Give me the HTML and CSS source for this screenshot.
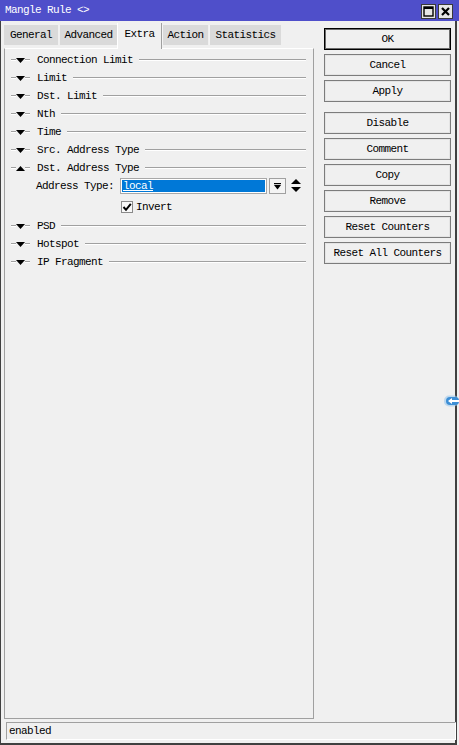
FILE: index.html
```html
<!DOCTYPE html>
<html>
<head>
<meta charset="utf-8">
<link rel="stylesheet" href="styles.css">
</head>
<body>
<div class="window">
  <div class="titlebar">
    <span class="title">Mangle Rule &lt;&gt;</span>
    <div class="tb-buttons">
      <span class="tb-btn"><svg width="11" height="11" viewBox="0 0 11 11"><rect x="1" y="1" width="9" height="9" fill="none" stroke="#000" stroke-width="1.4"/><rect x="1" y="1" width="9" height="2" fill="#000"/></svg></span>
      <span class="tb-btn"><svg width="11" height="11" viewBox="0 0 11 11"><path d="M2 2 L9 9 M9 2 L2 9" stroke="#000" stroke-width="2.2"/></svg></span>
    </div>
  </div>
  <div class="frame">
    <div class="main">
      <div class="left">
        <div class="tabs">
          <span class="tab t-general">General</span>
          <span class="tab t-advanced">Advanced</span>
          <span class="tab active t-extra">Extra</span>
          <span class="tab t-action">Action</span>
          <span class="tab t-stats">Statistics</span>
        </div>
        <div class="panel">
          <div class="row"><span class="seg"></span><svg class="tri" width="9" height="5" viewBox="0 0 9 5"><polygon points="0,0 9,0 4.5,5" fill="#000"/></svg><span class="seg"></span><span class="label">Connection Limit</span><span class="line"></span></div>
          <div class="row"><span class="seg"></span><svg class="tri" width="9" height="5" viewBox="0 0 9 5"><polygon points="0,0 9,0 4.5,5" fill="#000"/></svg><span class="seg"></span><span class="label">Limit</span><span class="line"></span></div>
          <div class="row"><span class="seg"></span><svg class="tri" width="9" height="5" viewBox="0 0 9 5"><polygon points="0,0 9,0 4.5,5" fill="#000"/></svg><span class="seg"></span><span class="label">Dst. Limit</span><span class="line"></span></div>
          <div class="row"><span class="seg"></span><svg class="tri" width="9" height="5" viewBox="0 0 9 5"><polygon points="0,0 9,0 4.5,5" fill="#000"/></svg><span class="seg"></span><span class="label">Nth</span><span class="line"></span></div>
          <div class="row"><span class="seg"></span><svg class="tri" width="9" height="5" viewBox="0 0 9 5"><polygon points="0,0 9,0 4.5,5" fill="#000"/></svg><span class="seg"></span><span class="label">Time</span><span class="line"></span></div>
          <div class="row"><span class="seg"></span><svg class="tri" width="9" height="5" viewBox="0 0 9 5"><polygon points="0,0 9,0 4.5,5" fill="#000"/></svg><span class="seg"></span><span class="label">Src. Address Type</span><span class="line"></span></div>
          <div class="row"><span class="seg"></span><svg class="tri" width="9" height="5" viewBox="0 0 9 5"><polygon points="0,5 9,5 4.5,0" fill="#000"/></svg><span class="seg"></span><span class="label">Dst. Address Type</span><span class="line"></span></div>
          <div class="field-row">
            <span class="field-label">Address Type:</span>
            <span class="combo"><span class="combo-text">local</span></span>
            <span class="drop-btn"><svg width="7" height="7" viewBox="0 0 7 7"><rect x="0" y="0" width="7" height="1.2" fill="#000"/><polygon points="0,2 7,2 3.5,6.5" fill="#000"/></svg></span>
            <span class="spinner"><svg width="10" height="14" viewBox="0 0 10 14"><polygon points="0,5 10,5 5,0" fill="#000"/><polygon points="0,8 10,8 5,13" fill="#000"/></svg></span>
          </div>
          <div class="check-row">
            <span class="checkbox"><svg width="10" height="10" viewBox="0 0 10 10"><polyline points="1.5,5 4,7.8 8.8,1.8" fill="none" stroke="#000" stroke-width="2"/></svg></span>
            <span class="check-label">Invert</span>
          </div>
          <div class="row"><span class="seg"></span><svg class="tri" width="9" height="5" viewBox="0 0 9 5"><polygon points="0,0 9,0 4.5,5" fill="#000"/></svg><span class="seg"></span><span class="label">PSD</span><span class="line"></span></div>
          <div class="row"><span class="seg"></span><svg class="tri" width="9" height="5" viewBox="0 0 9 5"><polygon points="0,0 9,0 4.5,5" fill="#000"/></svg><span class="seg"></span><span class="label">Hotspot</span><span class="line"></span></div>
          <div class="row"><span class="seg"></span><svg class="tri" width="9" height="5" viewBox="0 0 9 5"><polygon points="0,0 9,0 4.5,5" fill="#000"/></svg><span class="seg"></span><span class="label">IP Fragment</span><span class="line"></span></div>
        </div>
      </div>
      <div class="right">
        <div class="btn default">OK</div>
        <div class="btn">Cancel</div>
        <div class="btn">Apply</div>
        <div class="btn spaced">Disable</div>
        <div class="btn">Comment</div>
        <div class="btn">Copy</div>
        <div class="btn">Remove</div>
        <div class="btn">Reset Counters</div>
        <div class="btn">Reset All Counters</div>
      </div>
    </div>
    <div class="status"><span>enabled</span></div>
  </div>
  <div class="edge-arrow"><svg width="16" height="12" viewBox="0 0 16 12"><rect x="1" y="0.5" width="15" height="11" rx="5" fill="#9cc8ec" opacity="0.6"/><rect x="3" y="2" width="13" height="8" rx="4" fill="#3d8fd6"/><polygon points="5,6 9,3 9,5 16,5 16,7 9,7 9,9" fill="#fff"/></svg></div>
</div>
</body>
</html>
```

FILE: styles.css
```css
* { box-sizing: border-box; }
html, body { margin: 0; padding: 0; }
body {
  background: #f0f0f0;
  font-family: "Liberation Mono", "DejaVu Sans Mono", monospace;
  font-size: 11px;
  letter-spacing: -0.6px;
  color: #000;
}
.window {
  position: relative;
  width: 459px;
  height: 745px;
  overflow: hidden;
}
.titlebar {
  height: 21px;
  background: #4f4fca;
  display: flex;
  align-items: center;
  justify-content: space-between;
  padding: 0 6px 0 5px;
}
.title { color: #fff; line-height: 21px; }
.tb-buttons { display: flex; gap: 2px; margin-top: 1px; }
.tb-btn {
  width: 15px;
  height: 15px;
  background: #e6e6e6;
  border: 1px solid #3a3a3a;
  display: flex;
  align-items: center;
  justify-content: center;
}
.tb-btn svg { display: block; }
.frame {
  width: 457px;
  height: 724px;
  border-left: 1px solid #404040;
  border-right: 2px solid #404040;
  border-bottom: 2px solid #404040;
  padding: 2px 0 0 3px;
  display: flex;
  flex-direction: column;
}
.main {
  height: 696px;
  display: flex;
}
.left {
  width: 310px;
  display: flex;
  flex-direction: column;
}
.tabs {
  height: 25px;
  display: flex;
  align-items: flex-start;
  position: relative;
  z-index: 1;
}
.tab {
  margin-top: 2px;
  height: 20px;
  line-height: 20px;
  text-align: center;
  background: #dadada;
  flex: none;
}
.t-general { width: 54px; margin-right: 2px; }
.t-advanced { width: 57px; }
.t-extra { width: 45px; }
.t-action { width: 46px; margin-right: 1px; border-left: 1px solid #f4f4f4; }
.t-stats { width: 72px; border-left: 1px solid #f4f4f4; }
.tab.active {
  margin-top: 0;
  height: 26px;
  line-height: 22px;
  background: #f0f0f0;
  border-left: 1px solid #fff;
  border-right: 1px solid #a0a0a0;
}
.panel {
  flex: 1;
  border-top: 1px solid #fff;
  border-left: 1px solid #a0a0a0;
  border-right: 1px solid #a0a0a0;
  border-bottom: 1px solid #a0a0a0;
  padding: 2px 7px 0 6px;
}
.row {
  height: 18px;
  display: flex;
  align-items: center;
}
.seg {
  width: 5px;
  height: 2px;
  border-top: 1px solid #a0a0a0;
  border-bottom: 1px solid #fff;
}
.tri { display: block; }
.label { margin-left: 7px; margin-right: 6px; white-space: nowrap; }
.line {
  flex: 1;
  height: 2px;
  border-top: 1px solid #a0a0a0;
  border-bottom: 1px solid #fff;
}
.field-row {
  height: 18px;
  display: flex;
  align-items: center;
}
.field-label { margin-left: 25px; width: 84px; }
.combo {
  width: 147px;
  height: 16px;
  border: 1px solid #a8a8a8;
  padding: 1px;
  background: #fff;
  display: flex;
}
.combo-text {
  flex: 1;
  background: #0078d7;
  color: #fff;
  line-height: 12px;
  padding-left: 1px;
  text-decoration: underline;
  text-underline-offset: 1px;
}
.drop-btn {
  margin-left: 2px;
  width: 17px;
  height: 16px;
  border: 1px solid #a0a0a0;
  background: #f4f4f4;
  display: flex;
  align-items: center;
  justify-content: center;
}
.drop-btn svg, .spinner svg { display: block; }
.spinner { margin-left: 5px; }
.check-row {
  height: 22px;
  display: flex;
  align-items: center;
  padding-left: 110px;
  padding-top: 2px;
}
.checkbox {
  width: 12px;
  height: 12px;
  border: 1px solid #8a8a8a;
  background: #f8f8f8;
  display: flex;
  align-items: center;
  justify-content: center;
}
.checkbox svg { display: block; }
.check-label { margin-left: 3px; }
.right {
  margin-left: 10px;
  padding-top: 5px;
  width: 127px;
  display: flex;
  flex-direction: column;
  gap: 4px;
}
.btn {
  height: 22px;
  border: 1px solid #7c7c7c;
  box-shadow: inset 0 0 0 1px #e4e4e4;
  background: #f0f0f0;
  text-align: center;
  line-height: 20px;
}
.btn.default {
  border: 1px solid #000;
  box-shadow: inset 0 0 0 1px #6c6c6c;
}
.btn.spaced { margin-top: 6px; }
.status {
  margin-top: 3px;
  margin-left: 2px;
  width: 450px;
  height: 18px;
  border-top: 1px solid #a0a0a0;
  border-left: 1px solid #a0a0a0;
  border-right: 1px solid #fff;
  border-bottom: 1px solid #fff;
  padding-left: 2px;
  line-height: 16px;
}
.edge-arrow {
  position: absolute;
  left: 443px;
  top: 395px;
}
.edge-arrow svg { display: block; }
```
